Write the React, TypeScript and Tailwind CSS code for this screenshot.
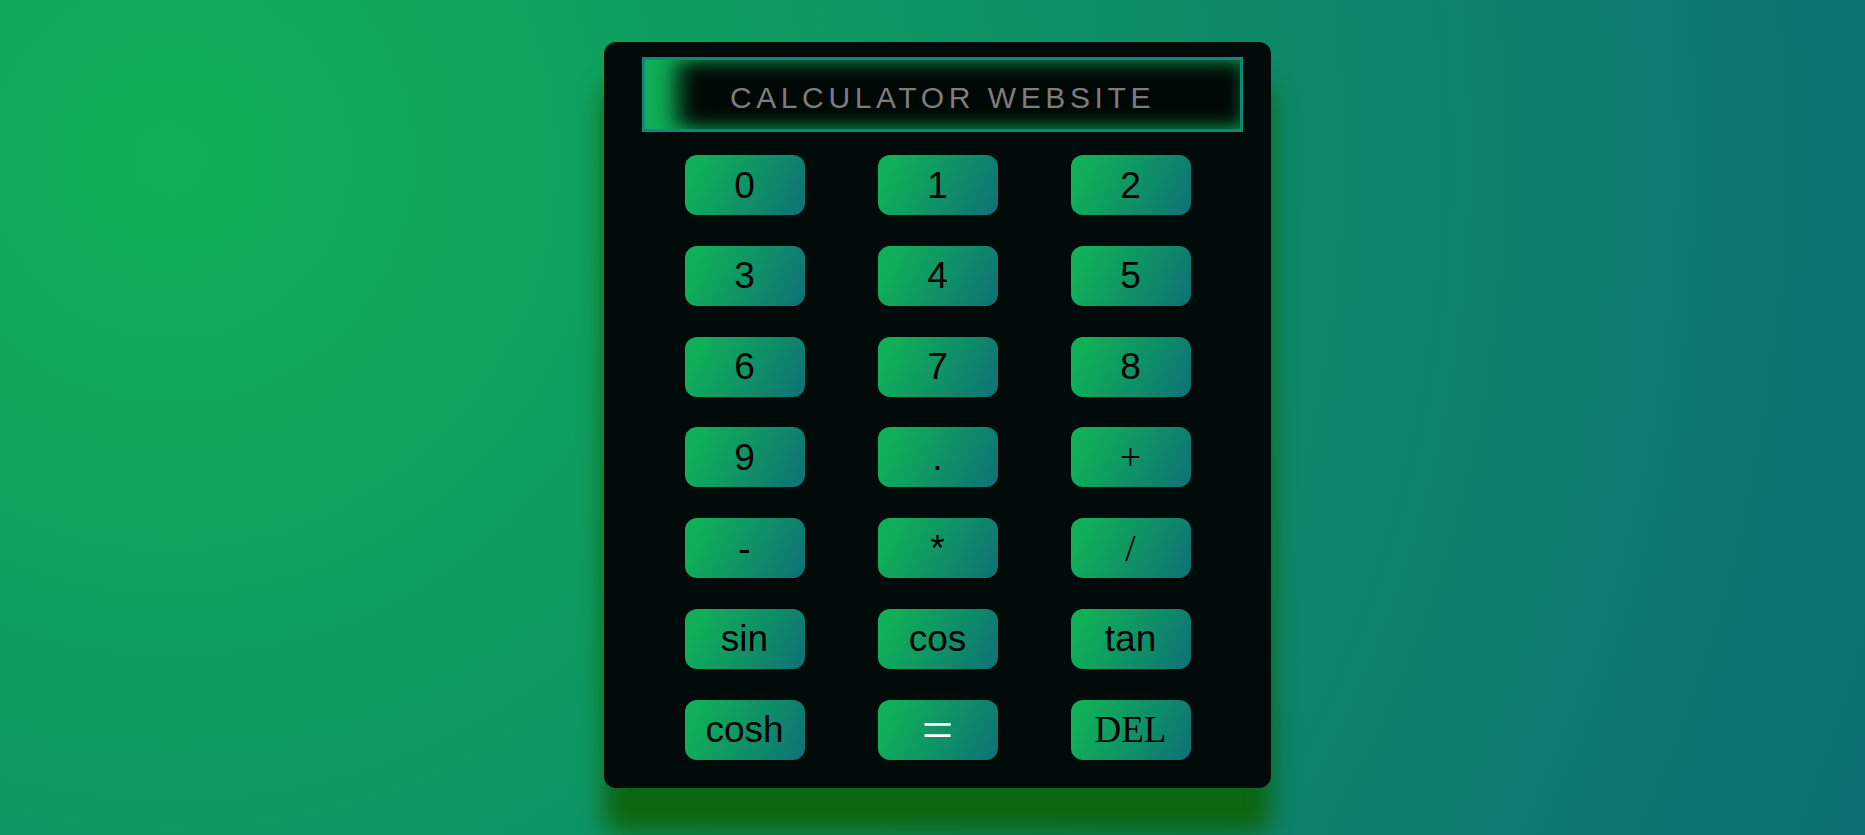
const keys: { label: string; kind?: "serif" | "equals" }[] = [
  { label: "0" }, { label: "1" }, { label: "2" },
  { label: "3" }, { label: "4" }, { label: "5" },
  { label: "6" }, { label: "7" }, { label: "8" },
  { label: "9" }, { label: "." }, { label: "+", kind: "serif" },
  { label: "-" }, { label: "*" }, { label: "/", kind: "serif" },
  { label: "sin" }, { label: "cos" }, { label: "tan" },
  { label: "cosh" }, { label: "=", kind: "equals" }, { label: "DEL", kind: "serif" },
];

const Key = ({ label, kind }: { label: string; kind?: "serif" | "equals" }) => {
  let text = "font-['Liberation_Sans',Arial,sans-serif] text-[37px] text-black";
  if (kind === "serif") text = "font-['Liberation_Serif','Times_New_Roman',serif] text-[37px] text-black";
  if (kind === "equals") text = "font-['Liberation_Serif','Times_New_Roman',serif] text-[56px] text-white";
  return (
    <button
      className={`h-[60px] w-[120px] rounded-[12px] bg-[linear-gradient(115deg,#10b058_12%,#0e7176_100%)] flex items-center justify-center leading-none ${text}`}
    >
      {label}
    </button>
  );
};

const App = () => {
  return (
    <div className="h-screen overflow-hidden bg-[radial-gradient(circle_at_170px_160px,#10b058_0%,#0c6f74_100%)]">
      <div className="flex justify-center pl-[10px] pt-[42px]">
        <div className="w-[667px] rounded-[12px] bg-[#010b09] pt-[15px] pb-[28px] flex flex-col shadow-[0_45px_25px_#0d6611]">
          <div className="ml-[38px] w-[601px] h-[75px] border-[3px] border-[#0e8a74] bg-[#000805] shadow-[inset_36px_0_24px_-4px_#10b058,inset_0_0_16px_rgba(16,176,88,0.5)] flex items-center justify-center pt-[7px]">
            <span className="font-['Liberation_Sans',Arial,sans-serif] text-[30px] tracking-[4.6px] text-[#7d7d7d] leading-none">
              CALCULATOR WEBSITE
            </span>
          </div>
          <div className="mt-[23px] grid grid-cols-[120px_120px_120px] justify-center gap-x-[73px] gap-y-[30.8px]">
            {keys.map((k) => (
              <Key key={k.label} label={k.label} kind={k.kind} />
            ))}
          </div>
        </div>
      </div>
    </div>
  );
};

export default App;
